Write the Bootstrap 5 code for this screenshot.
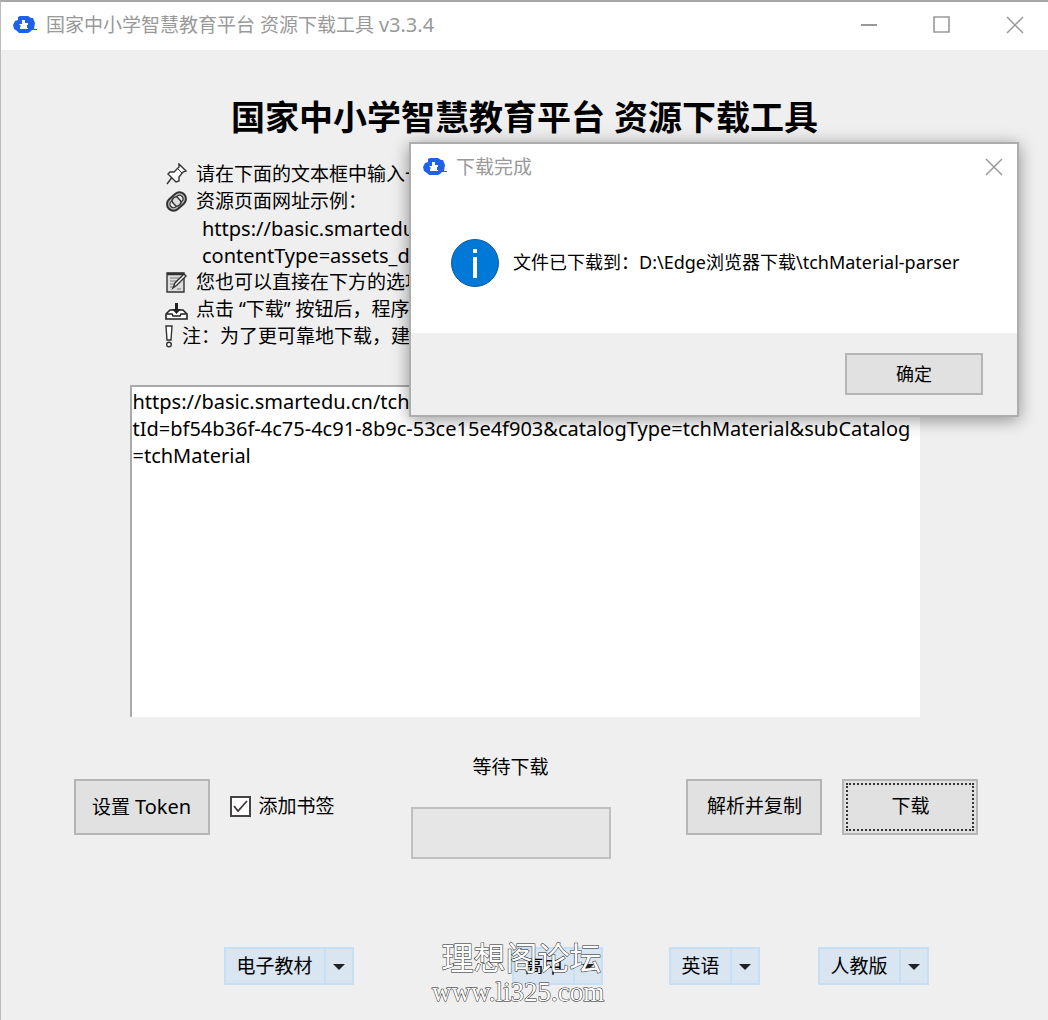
<!DOCTYPE html>
<html lang="zh-CN">
<head>
<meta charset="utf-8">
<meta name="viewport" content="width=device-width, initial-scale=1">
<title>国家中小学智慧教育平台 资源下载工具</title>
<link href="https://cdn.jsdelivr.net/npm/bootstrap@5.3.0/dist/css/bootstrap.min.css" rel="stylesheet">
<style>
body{background:#efefef;color:#000;font:19px/27px "Noto Sans","Noto Sans CJK SC",sans-serif}
.app{min-height:100vh;border-top:2px solid #a6a6a6;border-left:1px solid #bcbcbc}
.titlebar{height:48px;background:#fff;color:#999;padding:0 24px 2px 12px}
.caption{gap:55px}
.win-btn{border:0;background:none;padding:0;width:18px;height:18px;line-height:0}
.headline{font-size:34px;line-height:44px;font-weight:700;margin:45px 0 22px}
.tips{padding-left:164px}
.tips svg{flex:none}
.tips .url{padding-left:37px}
.latin{font-size:20px}
.urls{display:block;width:790px;max-width:92%;height:332px;margin:35px auto 0;border:0;border-top:2px solid #aaa;border-left:2px solid #aaa;border-radius:0;background:#fff;color:#000;padding:1px;resize:none;outline:0;white-space:pre;overflow:hidden;font-size:20px;line-height:27px}
.actions{width:908px;max-width:96%;margin:37px auto 0;padding-left:3px}
.wbtn{height:56px;width:136px;background:#e1e1e1;border:2px solid #b5b5b5;border-radius:0;font-size:19px;padding:0;color:#000}
.wbtn.current{padding:2px}
.wbtn.current span{display:flex;align-items:center;justify-content:center;height:100%;border:2px dotted #333}
.tick{appearance:none;width:21px;height:21px;margin:0;border:2px solid #444;background:#fff url("data:image/svg+xml,%3Csvg xmlns='http://www.w3.org/2000/svg' viewBox='0 0 17 17'%3E%3Cpath d='M2 8l4 5 9-10' fill='none' stroke='%23443a44' stroke-width='1.8'/%3E%3C/svg%3E")}
.bar{width:200px;height:52px;border:2px solid #bfbfbf;background:#e6e6e6;border-radius:0}
.state{margin-bottom:26px}
.filters{width:906px;max-width:96%;margin:88px auto 0;padding:0 49px 0 152px}
.pick{appearance:none;height:38px;border:2px solid #c6dff4;border-radius:0;color:#000;padding:0 0 0 11px;background:#d9e6f1 url("data:image/svg+xml,%3Csvg xmlns='http://www.w3.org/2000/svg' width='28' height='34'%3E%3Cpath d='M0 0h2v34H0z' fill='%23c6dff4'/%3E%3Cpath d='M9 15h12l-6 6z' fill='%23222'/%3E%3C/svg%3E") right center no-repeat}
.w-l{width:130px}.w-m{width:111px}.w-s{width:91px}
.gap-a{margin-left:158px}.gap-b{margin-left:66px}.gap-c{margin-left:58px}
.popup{position:absolute;left:409px;top:142px;width:610px;max-width:100%;background:#fff;border:2px solid #adadad;box-shadow:0 3px 16px rgba(0,0,0,.4)}
.popup-head{height:48px;padding:0 14px 0 12px;color:#999}
.popup-head>*{margin-top:-2px}
.popup-main{height:141px;padding-left:40px;gap:14px;font-size:18px}
.popup-foot{height:82px;background:#efefef;padding-right:34px}
.popup-foot .wbtn{width:138px;height:42px;font-size:18px}
.stamp{position:absolute;left:432px;top:938px;color:#fff;-webkit-text-stroke:1px #222;paint-order:stroke fill;pointer-events:none}
.stamp-name{font:32px/36px "Noto Sans CJK SC",sans-serif;padding-left:7px}
.stamp-site{font:27px/36px "Liberation Serif",serif}
</style>
<script src="https://cdn.jsdelivr.net/npm/bootstrap@5.3.0/dist/js/bootstrap.bundle.min.js"></script>
</head>
<body>
<svg width="0" height="0" class="position-absolute" aria-hidden="true">
<symbol id="logo" viewBox="0 0 25 18"><path d="M5 1l2-1h8l3 2h2l2 5-1 6h3v1h-5l-2 2-2 1H6l-2-2-3-2-1-4 2-4 3-1z" fill="#1e62ec"/><path d="M9 4h3v3h3v2h-1v3h1v1H7v-2l1-1-2-2h3z" fill="#fff"/></symbol>
<symbol id="close" viewBox="0 0 18 18"><path d="M1 1l16 16M17 1L1 17" stroke="#999" stroke-width="1.5" fill="none"/></symbol>
</svg>
<div class="app">
<header class="titlebar d-flex align-items-center">
<svg width="25" height="18"><use href="#logo"/></svg>
<span class="ms-2">国家中小学智慧教育平台 资源下载工具 <span class="latin">v3.3.4</span></span>
<div class="caption d-flex ms-auto">
<button class="win-btn" aria-label="最小化"><svg width="18" height="18"><path d="M1 9h16" stroke="#999" stroke-width="2"/></svg></button>
<button class="win-btn" aria-label="最大化"><svg width="18" height="18"><path d="M1 1h15v15H1z" stroke="#999" stroke-width="1.6" fill="none"/></svg></button>
<button class="win-btn" aria-label="关闭"><svg width="18" height="18"><use href="#close"/></svg></button>
</div>
</header>
<main>
<h1 class="headline text-center">国家中小学智慧教育平台 资源下载工具</h1>
<div class="tips">
<div class="d-flex align-items-center gap-2"><svg width="23" height="23" viewBox="0 0 23 23" fill="#fff" stroke="#333" stroke-width="1.4"><path d="M2 21l6-8"/><path d="M14 1l7 7-3 1-4 5v4l-3 1-8-8 2-2h4l5-5z"/><path d="M12 5l5 5" stroke-width="1"/></svg><span>请在下面的文本框中输入一</span></div>
<div class="d-flex align-items-center gap-2"><svg width="23" height="23" viewBox="0 0 23 23" fill="none" stroke="#333"><g transform="rotate(-42 11.5 11.5)"><rect x="1" y="5" width="21" height="13" rx="6.5" fill="#bbb" stroke-width="2"/><rect x="4" y="8" width="15" height="7" rx="3.5" fill="#eee" stroke-width="1.2"/><rect x="8" y="7" width="7" height="9" rx="3" fill="#ddd" stroke-width="1.4"/></g></svg><span>资源页面网址示例：</span></div>
<div class="url latin">https://basic.smartedu</div>
<div class="url latin">contentType=assets_d</div>
<div class="d-flex align-items-center gap-2"><svg width="23" height="23" viewBox="0 0 23 23" fill="#ddd" stroke="#333" stroke-width="1.4"><path d="M2 2h17v19H2z"/><path d="M2 3h17" stroke-width="2.5"/><path d="M5 7h9M5 10h7M5 13h5M5 16h3M12 18h4" stroke="#999"/><path d="M8 17l2-5 9-9 2 2-9 9z" fill="#fff"/></svg><span>您也可以直接在下方的选项</span></div>
<div class="d-flex align-items-center gap-2"><svg width="23" height="23" viewBox="0 0 23 23" fill="#fff" stroke="#222" stroke-width="1.6"><path d="M5 12h13l4 4v5H1v-5z"/><path d="M2 16h5l1 2h7l1-2h5" fill="none"/><path d="M10 5h3v6h3l-4.500 5L7 11h3z" fill="#222" stroke="none"/></svg><span>点击 “下载” 按钮后，程序</span></div>
<div class="d-flex align-items-center gap-2"><svg width="9" height="23" viewBox="0 0 9 23" fill="#fff" stroke="#333" stroke-width="1.4"><path d="M1 1h6l-1 14H2z"/><circle cx="4" cy="19.500" r="2.300"/></svg><span>注：为了更可靠地下载，建</span></div>
</div>
<textarea class="urls" aria-label="资源页面网址" spellcheck="false">https://basic.smartedu.cn/tchMaterial/detail?contentType=assets_document&amp;conten
tId=bf54b36f-4c75-4c91-8b9c-53ce15e4f903&amp;catalogType=tchMaterial&amp;subCatalog
=tchMaterial</textarea>
<div class="actions d-flex align-items-center justify-content-between">
<div class="d-flex align-items-center">
<button class="btn wbtn me-3">设置 <span class="latin">Token</span></button>
<input class="tick ms-1" type="checkbox" id="bookmark" checked><label class="ms-2" for="bookmark">添加书签</label>
</div>
<div class="text-center">
<div class="state" id="state">等待下载</div>
<div class="progress bar" role="progressbar" aria-labelledby="state" aria-valuenow="0" aria-valuemin="0" aria-valuemax="100"></div>
</div>
<div class="d-flex">
<button class="btn wbtn me-3">解析并复制</button>
<button class="btn wbtn current ms-1"><span>下载</span></button>
</div>
</div>
<div class="filters d-flex">
<select class="pick w-l" aria-label="资源类型"><option>电子教材</option></select>
<select class="pick w-s gap-a" aria-label="学段"><option>高中</option></select>
<select class="pick w-s gap-b" aria-label="学科"><option>英语</option></select>
<select class="pick w-m gap-c" aria-label="版本"><option>人教版</option></select>
</div>
</main>
</div>
<section class="popup" role="dialog" aria-labelledby="popup-title">
<div class="popup-head d-flex align-items-center">
<svg width="25" height="18"><use href="#logo"/></svg>
<span class="ms-2" id="popup-title">下载完成</span>
<button class="win-btn ms-auto" aria-label="关闭"><svg width="18" height="18"><use href="#close"/></svg></button>
</div>
<div class="popup-main d-flex align-items-center">
<svg width="48" height="48" viewBox="0 0 48 48"><circle cx="24" cy="24" r="23.500" fill="#0078d7" stroke="#10599a"/><path d="M22 10h4v4h-4zM22 18h4v21h-4z" fill="#fff"/></svg>
<span>文件已下载到：D:\Edge浏览器下载\tchMaterial-parser</span>
</div>
<div class="popup-foot d-flex align-items-center justify-content-end"><button class="btn wbtn">确定</button></div>
</section>
<div class="stamp text-center"><div class="stamp-name">理想阁论坛</div><div class="stamp-site">www.li325.com</div></div>
</body>
</html>
